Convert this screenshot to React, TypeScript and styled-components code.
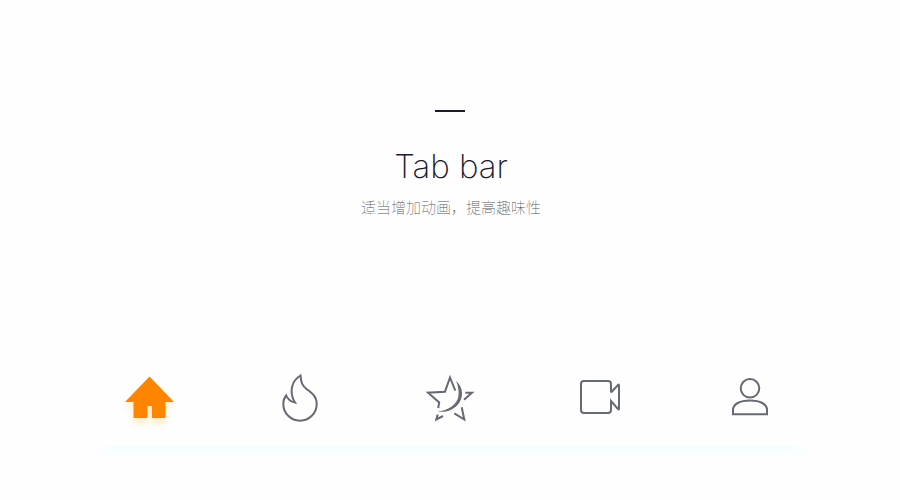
import { useState } from 'react'
import type { ReactNode } from 'react'
import styled, { createGlobalStyle } from 'styled-components'

const COLOR = {
  BACKGROUND: '#fefefe',
  INK: '#1b1b2a',
  TEXT_LIGHT: '#555661',
  ICON: '#666a73',
  ORANGE: '#ff8400',
}

type Tab = {
  id: string
  label: string
  icon: ReactNode
}

const tabs: Tab[] = [
  {
    id: 'home',
    label: '首页',
    icon: (
      <path
        className="solid"
        d="M29.5 8.5L54 34H45.5V50H32V38H27.5V50H13.5V34H5Z"
      />
    ),
  },
  {
    id: 'hot',
    label: '热门',
    icon: (
      <path d="M30.500 7.500C31 15 32.500 18 36.500 21C42 25 46.700 28.500 46.700 36A16.700 16.700 0 0 1 13.300 36C13.300 32 14.500 29.500 16.200 27.500C17.500 31 21 33.500 25 34.500C19 25 21 13 30.500 7.500Z" />
    ),
  },
  {
    id: 'favourites',
    label: '收藏',
    icon: (
      <>
        <path d="M35.300 22.700L30 9.500L25 23.700L8 24.700L19.200 34.500L18.200 40M17.700 46.500L16.300 51.500L23 48M45.300 24.700L52 24.700L44 31.800M41.700 39.300L44.300 51.500L34.300 45.300" />
        <path
          className="solid"
          d="M36 13C43.500 19 44 30 37.500 37C32 43 25 44.500 17.300 43.500C28 42.500 37 37 38.500 28C39 22 38 17 36 13Z"
        />
      </>
    ),
  },
  {
    id: 'video',
    label: '视频',
    icon: (
      <path d="M41 24.500V16A3 3 0 0 0 38 13H14A3 3 0 0 0 11 16V42A3 3 0 0 0 14 45H38A3 3 0 0 0 41 42V33L48 41Q49 42 49 40.500V17.500Q49 16 48 17L41 24.500" />
    ),
  },
  {
    id: 'profile',
    label: '我的',
    icon: (
      <>
        <circle cx="30" cy="20.300" r="9.300" />
        <path d="M13 46.300V42C13 36 20 32.500 30 32.500S47 36 47 42V46.300Z" />
      </>
    ),
  },
]

export default function App() {
  const [active, setActive] = useState('home')

  return (
    <Page>
      <GlobalStyle />
      <Header>
        <Dash />
        <Title>Tab bar</Title>
        <Subtitle>适当增加动画，提高趣味性</Subtitle>
      </Header>

      <TabBar>
        {tabs.map((tab) => (
          <TabButton
            key={tab.id}
            type="button"
            aria-label={tab.label}
            aria-pressed={active === tab.id}
            onClick={() => setActive(tab.id)}
          >
            <Icon viewBox="0 0 60 60" $active={active === tab.id}>
              {tab.icon}
            </Icon>
          </TabButton>
        ))}
      </TabBar>
      <BarShadow />
    </Page>
  )
}

const GlobalStyle = createGlobalStyle`
  body {
    margin: 0;
    background: ${COLOR.BACKGROUND};
  }
`
const Page = styled.main`
  padding: 110px 75px 40px;
  font-family: Inter, 'Noto Sans CJK SC', sans-serif;
`
const Header = styled.header`
  display: flex;
  flex-direction: column;
  align-items: center;
`
const Dash = styled.div`
  width: 30px;
  height: 2px;
  background: ${COLOR.INK};
`
const Title = styled.h1`
  margin: 34px 0 0;
  padding-left: 2px;
  color: ${COLOR.INK};
  font-size: 33px;
  font-weight: 200;
  line-height: 40px;
`
const Subtitle = styled.p`
  margin: 10px 0 0;
  padding-left: 2px;
  color: ${COLOR.TEXT_LIGHT};
  font-family: 'Noto Sans CJK SC', sans-serif;
  font-size: 15px;
  font-weight: 100;
  line-height: 22px;
`
const TabBar = styled.nav`
  display: grid;
  grid-template-columns: repeat(5, 1fr);
  margin-top: 150px;
`
const TabButton = styled.button`
  display: flex;
  justify-content: center;
  padding: 0 0 18px;
  border: 0;
  background: none;
  cursor: pointer;
`
const Icon = styled.svg<{ $active: boolean }>`
  width: 60px;
  height: 60px;
  overflow: visible;
  fill: none;
  stroke: ${({ $active }) => ($active ? COLOR.ORANGE : COLOR.ICON)};
  stroke-width: 2;
  filter: ${({ $active }) =>
    $active ? 'drop-shadow(0 5px 3px #ffd98a80)' : 'none'};

  .solid {
    fill: ${({ $active }) => ($active ? COLOR.ORANGE : COLOR.ICON)};
    stroke: none;
  }
`
const BarShadow = styled.div`
  height: 12px;
  margin: 0 12px 0 21px;
  background: linear-gradient(#f6fdff, #f8ffff 60%, ${COLOR.BACKGROUND});
  mask-image: linear-gradient(
    to right,
    transparent,
    #000 16px,
    #000 calc(100% - 24px),
    transparent
  );
`
